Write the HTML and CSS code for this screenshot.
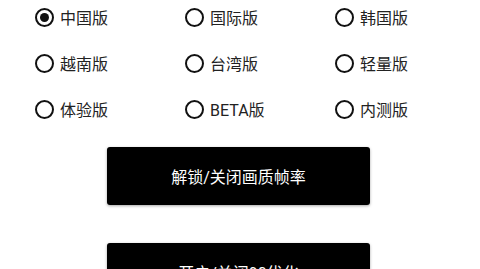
FILE: index.html
```html
<!DOCTYPE html>
<html>
<head>
    <meta name="viewport" content="width=device-width, initial-scale=1.0">
    <title>Version</title>
    <link rel="stylesheet" href="styles.css">
</head>
<body>
    <div class="page">
        <form class="versions">
            <label class="option"><input type="radio" name="ver" checked><span>中国版</span></label>
            <label class="option"><input type="radio" name="ver"><span>国际版</span></label>
            <label class="option"><input type="radio" name="ver"><span>韩国版</span></label>
            <label class="option"><input type="radio" name="ver"><span>越南版</span></label>
            <label class="option"><input type="radio" name="ver"><span>台湾版</span></label>
            <label class="option"><input type="radio" name="ver"><span>轻量版</span></label>
            <label class="option"><input type="radio" name="ver"><span>体验版</span></label>
            <label class="option"><input type="radio" name="ver"><span>BETA版</span></label>
            <label class="option"><input type="radio" name="ver"><span>内测版</span></label>
        </form>
        <div class="actions">
            <button type="button">解锁/关闭画质帧率</button>
            <button type="button">开启/关闭90优化</button>
        </div>
    </div>
</body>
</html>
```
FILE: styles.css
```css
body {
    margin: 0;
    background: #fff;
    font-family: Roboto, "Noto Sans CJK SC", sans-serif;
    color: #222;
    overflow: hidden;
}
.page {
    width: 480px;
    height: 269px;
}
.versions {
    display: grid;
    grid-template-columns: 150px 150px 150px;
    grid-auto-rows: 24px;
    row-gap: 22px;
    padding: 5px 0 0 35px;
    margin: 0;
}
.option {
    display: flex;
    align-items: center;
    gap: 6px;
    font-size: 16px;
}
.option input {
    appearance: none;
    -webkit-appearance: none;
    width: 19px;
    height: 19px;
    margin: 0;
    border: 2px solid #111;
    border-radius: 50%;
    box-sizing: border-box;
    position: relative;
}
.option input:checked::after {
    content: "";
    position: absolute;
    left: 3px;
    top: 3px;
    width: 9px;
    height: 9px;
    border-radius: 50%;
    background: #111;
}
.actions {
    display: flex;
    flex-direction: column;
    align-items: center;
    gap: 38px;
    margin-top: 26px;
}
.actions button {
    width: 263px;
    height: 58px;
    background: #000;
    color: #fff;
    border: none;
    border-radius: 3px;
    box-shadow: 0 1px 3px rgba(0, 0, 0, 0.35);
    font-family: inherit;
    font-size: 16px;
    margin-left: -3px;
}
```
